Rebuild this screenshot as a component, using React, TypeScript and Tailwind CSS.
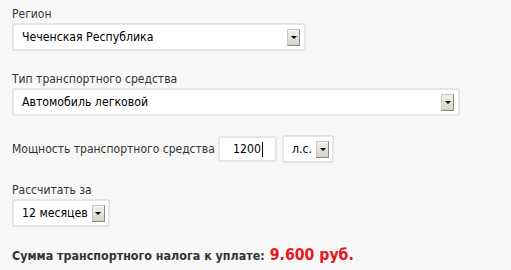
import React from "react";

function Arrow() {
  return (
    <span className="flex h-[17px] w-[13px] shrink-0 items-center justify-center border border-[#8a8a8a] border-t-[#c8c8c8] border-l-[#c8c8c8] bg-gradient-to-b from-[#f2f1ec] to-[#d4d2c8]">
      <span className="h-0 w-0 border-x-[3px] border-t-[3px] border-x-transparent border-t-black" />
    </span>
  );
}

function Select({ value, className }: { value: string; className: string }) {
  return (
    <div className={`flex h-[28px] items-center justify-between rounded-[3px] border-2 border-[#e6e6e4] bg-white pl-[8px] pr-[4px] ${className}`}>
      <span className="whitespace-nowrap text-[12.2px] text-black">{value}</span>
      <Arrow />
    </div>
  );
}

export default function App() {
  return (
    <div className="h-[270px] w-[511px] bg-[#f8f8f8] pl-3 pt-[6px] font-['DejaVu_Sans_Condensed',sans-serif] text-[12px] text-[#333]">
      <p className="leading-[17px]">Регион</p>
      <Select className="w-[294px]" value="Чеченская Республика" />

      <p className="mt-[20px] leading-[17px]">Тип транспортного средства</p>
      <Select className="w-[448px]" value="Автомобиль легковой" />

      <div className="mt-[19px] flex items-center">
        <span className="w-[206px] whitespace-nowrap">Мощность транспортного средства</span>
        <div className="flex h-[26px] w-[59px] items-center justify-end rounded-[3px] border-2 border-[#e6e6e4] bg-white pr-[12px] text-[12.2px] text-black">
          1200<span className="ml-[1px] h-[15px] w-px bg-black" />
        </div>
        <Select className="ml-[5px] w-[52px] gap-1" value="л.с." />
      </div>

      <p className="mt-[19px] leading-[17px]">Рассчитать за</p>
      <Select className="w-[98px] gap-1" value="12 месяцев" />

      <p className="mt-[16px] flex items-baseline gap-[5px] whitespace-nowrap text-[12.4px] font-bold text-[#333]">
        Сумма транспортного налога к уплате:
        <span className="text-[15.7px] text-[#e8161b]">9.600 руб.</span>
      </p>
    </div>
  );
}
